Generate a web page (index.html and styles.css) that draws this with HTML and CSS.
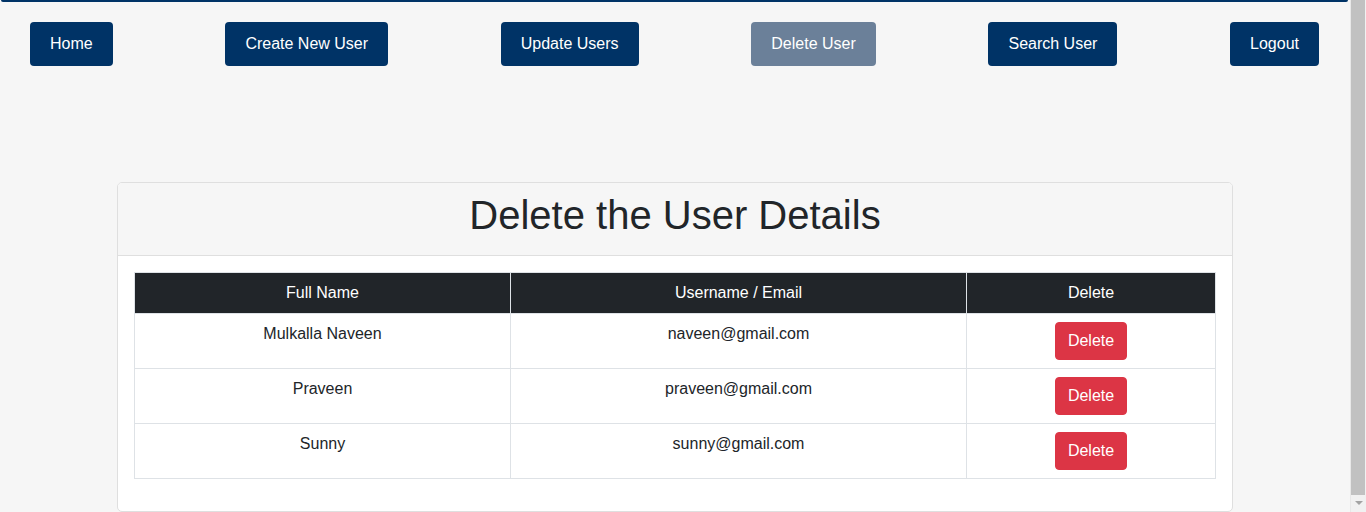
FILE: index.html
```html
<!DOCTYPE html>
<html lang="en">
<head>
<meta charset="utf-8">
<title>Delete User</title>
<link rel="stylesheet" href="styles.css">
</head>
<body>
<div class="page">
  <div class="topline"></div>
  <nav class="nav">
    <a class="nav-btn" href="#">Home</a>
    <a class="nav-btn" href="#">Create New User</a>
    <a class="nav-btn" href="#">Update Users</a>
    <a class="nav-btn active" href="#">Delete User</a>
    <a class="nav-btn" href="#">Search User</a>
    <a class="nav-btn" href="#">Logout</a>
  </nav>
  <main class="card">
    <div class="card-header">
      <h1 class="title">Delete the User Details</h1>
    </div>
    <div class="card-body">
      <table class="users">
        <thead>
          <tr>
            <th class="c-name">Full Name</th>
            <th class="c-mail">Username / Email</th>
            <th class="c-del">Delete</th>
          </tr>
        </thead>
        <tbody>
          <tr>
            <td>Mulkalla Naveen</td>
            <td>naveen@gmail.com</td>
            <td><button class="btn-del">Delete</button></td>
          </tr>
          <tr>
            <td>Praveen</td>
            <td>praveen@gmail.com</td>
            <td><button class="btn-del">Delete</button></td>
          </tr>
          <tr>
            <td>Sunny</td>
            <td>sunny@gmail.com</td>
            <td><button class="btn-del">Delete</button></td>
          </tr>
        </tbody>
      </table>
    </div>
  </main>
</div>
<div class="scrollbar" aria-hidden="true">
  <div class="scroll-thumb"></div>
  <div class="scroll-arrow"></div>
</div>
</body>
</html>
```
FILE: styles.css
```css
html, body {
  margin: 0;
  padding: 0;
}
body {
  background: #f6f6f6;
  font-family: "Liberation Sans", Arial, sans-serif;
  font-size: 16px;
  line-height: 1.5;
  color: #212529;
  overflow: hidden;
}
.page {
  margin-right: 16px;
  padding-bottom: 20px;
}
.topline {
  height: 2px;
  margin: 0 2px 0 1px;
  background: #003366;
  border-radius: 0 0 3px 3px;
}
.nav {
  display: flex;
  justify-content: space-between;
  padding: 0 31px 0 30px;
  margin-top: 20px;
}
.nav-btn {
  display: block;
  background: #003366;
  color: #fff;
  text-decoration: none;
  padding: 10px 20px;
  line-height: 24px;
  border-radius: 4px;
}
.nav-btn.active {
  background: #6b8099;
}
.card {
  width: 1114px;
  margin: 116px auto 0;
  background: #fff;
  border: 1px solid #dfdfdf;
  border-radius: 5px;
  overflow: hidden;
}
.card-header {
  background: #f6f6f6;
  border-bottom: 1px solid #dfdfdf;
  padding: 8px 16px;
}
.title {
  margin: 0 0 8px;
  text-align: center;
  font-size: 40px;
  font-weight: 400;
  line-height: 48px;
  color: #212529;
}
.card-body {
  padding: 16px;
}
.users {
  width: 100%;
  border-collapse: collapse;
  margin-bottom: 16px;
  text-align: center;
}
.users th, .users td {
  border: 1px solid #dee2e6;
  padding: 8px;
  vertical-align: top;
  font-weight: 400;
}
.users thead th {
  background: #212529;
  color: #fff;
}
.c-name { width: 359px; }
.c-mail { width: 439px; }
.btn-del {
  display: inline-block;
  vertical-align: top;
  font-family: inherit;
  font-size: 16px;
  line-height: 24px;
  padding: 6px 12px;
  border: 1px solid #dc3545;
  background: #dc3545;
  color: #fff;
  border-radius: 4px;
}
.scrollbar {
  position: fixed;
  top: 0;
  right: 0;
  width: 16px;
  height: 100vh;
  background: #f1f1f1;
  border-left: 1px solid #e8e8e8;
  box-sizing: border-box;
}
.scroll-thumb {
  margin: 0 1px 0 0;
  height: 495px;
  background: #c1c1c1;
}
.scroll-arrow {
  width: 0;
  height: 0;
  margin: 6px auto 0;
  border-left: 4px solid transparent;
  border-right: 4px solid transparent;
  border-top: 4px solid #a3a3a3;
}
```
